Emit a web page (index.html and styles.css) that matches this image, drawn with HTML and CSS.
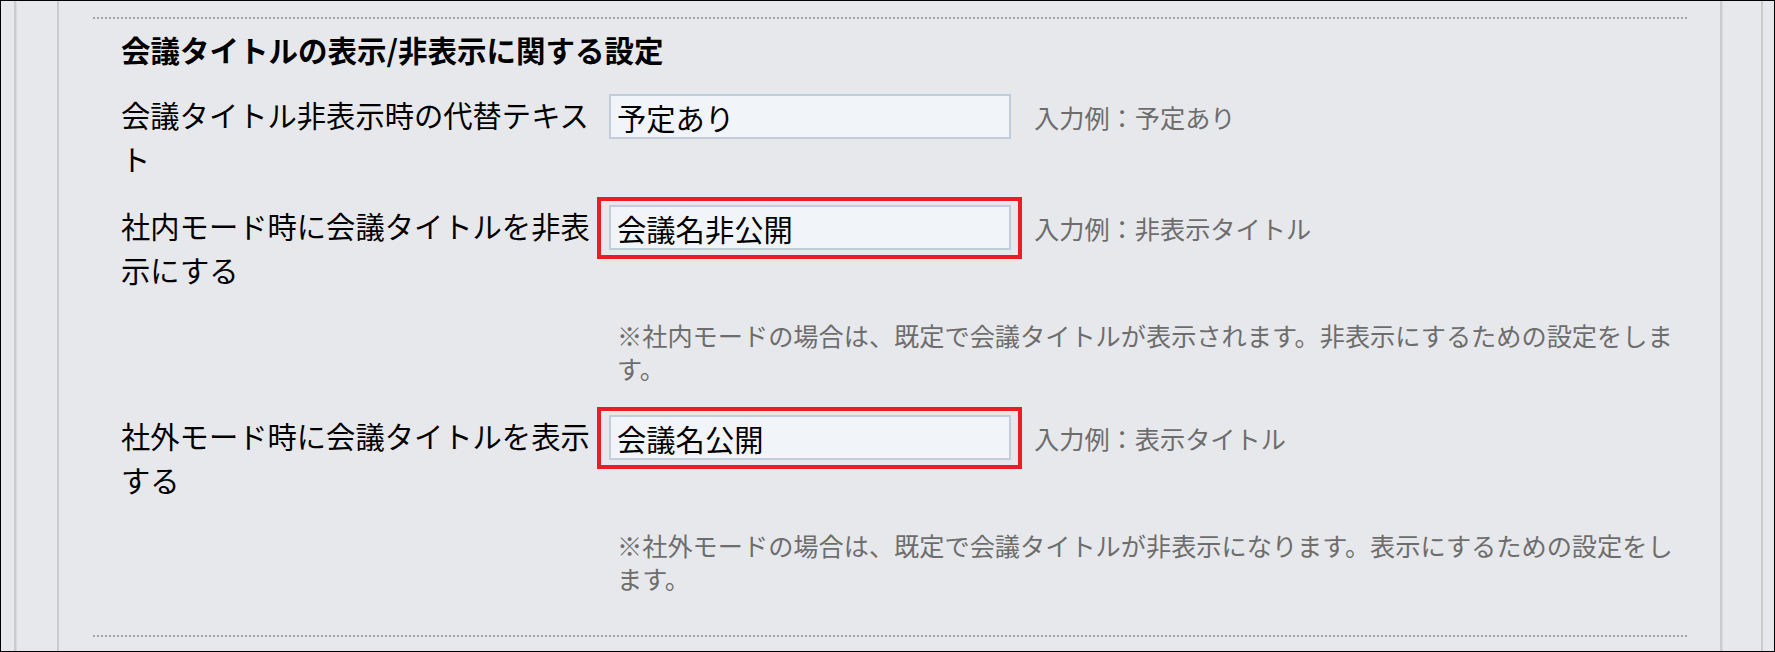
FILE: index.html
```html
<!DOCTYPE html>
<html lang="ja">
<head>
<meta charset="utf-8">
<title>会議タイトルの表示/非表示に関する設定</title>
<link rel="stylesheet" href="styles.css">
</head>
<body>
<div class="frame">
  <div class="edge"></div>
  <div class="rail rail-left"></div>
  <main class="main">
    <section class="section">
      <h2 class="heading">会議タイトルの表示/非表示に関する設定</h2>
      <div class="rows">
        <div class="row">
          <div class="label">会議タイトル非表示時の代替テキスト</div>
          <div class="field">
            <span class="input-wrap"><input class="input" type="text" value="予定あり"></span>
            <span class="hint">入力例：予定あり</span>
          </div>
        </div>
        <div class="row">
          <div class="label">社内モード時に会議タイトルを非表示にする</div>
          <div class="field">
            <span class="input-wrap marked"><input class="input" type="text" value="会議名非公開"></span>
            <span class="hint">入力例：非表示タイトル</span>
          </div>
        </div>
        <p class="note">※社内モードの場合は、既定で会議タイトルが表示されます。非表示にするための設定をします。</p>
        <div class="row">
          <div class="label">社外モード時に会議タイトルを表示する</div>
          <div class="field">
            <span class="input-wrap marked"><input class="input" type="text" value="会議名公開"></span>
            <span class="hint">入力例：表示タイトル</span>
          </div>
        </div>
        <p class="note">※社外モードの場合は、既定で会議タイトルが非表示になります。表示にするための設定をします。</p>
      </div>
    </section>
  </main>
  <div class="rail rail-right"></div>
  <div class="edge edge-right"></div>
</div>
</body>
</html>
```

FILE: styles.css
```css
* { box-sizing: border-box; }

html, body {
  margin: 0;
  padding: 0;
  background: #e7e8eb;
}

body {
  font-family: "Noto Sans CJK JP", "Noto Sans", sans-serif;
  color: #000;
}

.frame {
  width: 1775px;
  height: 652px;
  border: 1px solid #000;
  display: flex;
  overflow: hidden;
  background: #e7e8eb;
}

.edge {
  width: 13px;
  flex: none;
}

.rail {
  flex: none;
  border-left: 2px solid #cbccd0;
  box-shadow: inset 1px 0 0 #d9dadd;
}

.rail-left { width: 43px; }
.rail-right { width: 41px; }

.edge-right {
  width: 13px;
  border-left: 2px solid #cbccd0;
}

.main {
  flex: 1;
  border-left: 2px solid #cbccd0;
  padding: 16px 33px 0 34px;
}

.section {
  border-top: 2px dotted #a3a4a8;
  border-bottom: 2px dotted #a3a4a8;
  padding: 10px 0 40px 28px;
}

.heading {
  margin: 0 0 23px;
  font-size: 29.5px;
  line-height: 40px;
  font-weight: bold;
}

.rows {
  display: flex;
  flex-direction: column;
}

.row {
  display: flex;
  align-items: flex-start;
  margin-bottom: 23px;
}

.label {
  width: 476px;
  flex: none;
  margin-right: 12px;
  font-size: 29.3px;
  line-height: 44px;
}

.field {
  display: flex;
  align-items: center;
  margin-top: 2px;
}

.input-wrap {
  position: relative;
  display: block;
}

.input-wrap.marked::after {
  content: "";
  position: absolute;
  top: -8px;
  bottom: -9px;
  left: -12px;
  right: -11px;
  border: 4px solid #ec1c24;
  pointer-events: none;
}

.input {
  display: block;
  width: 402px;
  height: 45px;
  margin: 0;
  padding: 0 6px;
  border: 2px solid #c2ccdb;
  background: #f1f4f9;
  font-family: inherit;
  font-size: 29.3px;
  color: #000;
  outline: none;
}

.hint {
  margin-left: 23px;
  font-size: 25.2px;
  color: #6d6d6d;
  white-space: nowrap;
}

.note {
  margin: 5px 0 28px 492px;
  padding-left: 4px;
  font-size: 25.2px;
  line-height: 33px;
  color: #6d6d6d;
}

.note:last-child { margin-bottom: 0; }
```
